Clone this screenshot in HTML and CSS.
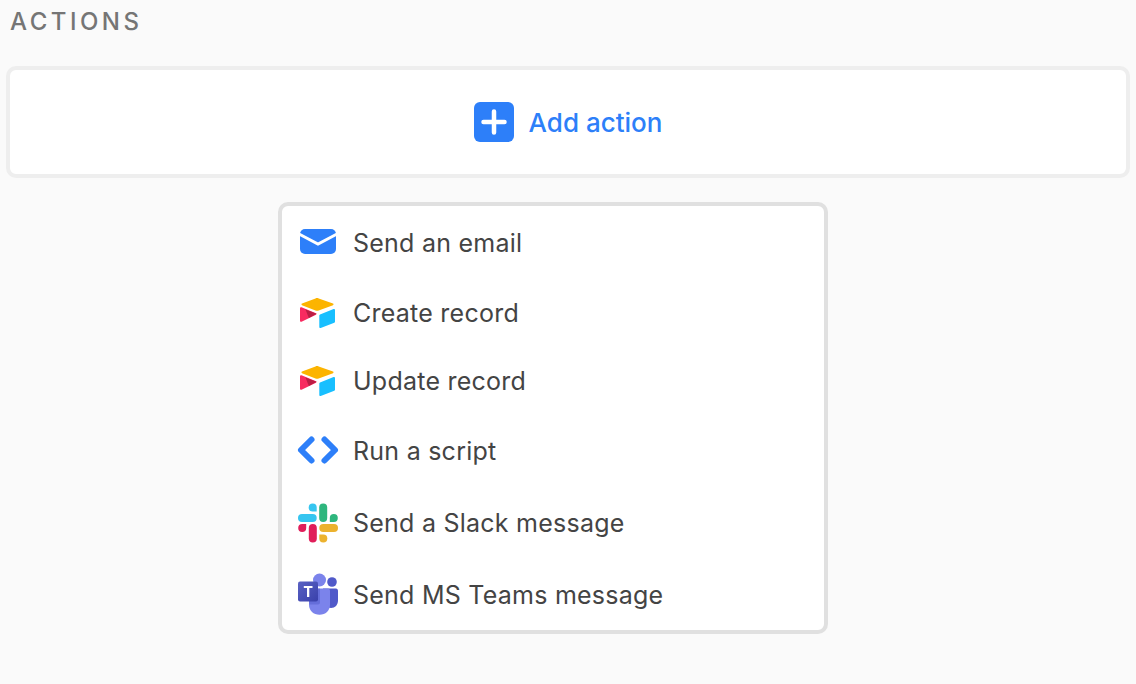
FILE: index.html
```html
<!DOCTYPE html>
<html lang="en">
<head>
<meta charset="utf-8">
<title>Actions</title>
<link rel="stylesheet" href="styles.css">
</head>
<body>
<h2 class="heading">ACTIONS</h2>
<div class="add-card">
  <svg class="add-icon" viewBox="0 0 40 40" width="40" height="40"><rect width="40" height="40" rx="6" fill="#2d7ff9"/><path d="M20 9.500V30.500M9.500 20H30.500" stroke="#fff" stroke-width="4.500" stroke-linecap="round"/></svg>
  <span class="add-label">Add action</span>
</div>
<div class="menu">
  <div class="row row-a">
    <svg class="icon" viewBox="0 0 40 40" width="40" height="40"><rect x="2" y="6" width="36" height="25" rx="5" fill="#2d7ff9"/><path d="M1 11L20 21L39 11" fill="none" stroke="#fff" stroke-width="3"/></svg>
    <span>Send an email</span>
  </div>
  <div class="row row-a">
    <svg class="icon" viewBox="0 0 40 40" width="40" height="40"><path d="M17.500 5.400L4 10.600C3.300 10.900 3.300 11.900 4 12.200L17.500 17.500C18.500 17.900 19.700 17.900 20.700 17.500L35 12.200C35.700 11.900 35.700 10.900 35 10.600L20.700 5.400C19.700 5 18.500 5 17.500 5.400Z" fill="#fcb400"/><path d="M21.300 22.600V34C21.300 34.800 22 35.300 22.700 35L36.300 29.700C36.800 29.500 37 29.100 37 28.700V17C37 16.200 36.300 15.700 35.600 16L22 21.500C21.600 21.700 21.300 22.100 21.300 22.600Z" fill="#18bfff"/><path d="M2 15.300V27.800C2 28.600 2.800 29.100 3.500 28.700L18 21.700C18.600 21.400 18.600 20.600 18 20.300L3.500 14.300C2.800 14 2 14.500 2 15.300Z" fill="#f82b60"/><path d="M7.500 16.500L18.500 20.800L10.800 25Z" fill="#ba1e45"/></svg>
    <span>Create record</span>
  </div>
  <div class="row row-b">
    <svg class="icon" viewBox="0 0 40 40" width="40" height="40"><path d="M17.500 5.400L4 10.600C3.300 10.900 3.300 11.900 4 12.200L17.500 17.500C18.500 17.900 19.700 17.900 20.700 17.500L35 12.200C35.700 11.900 35.700 10.900 35 10.600L20.700 5.400C19.700 5 18.500 5 17.500 5.400Z" fill="#fcb400"/><path d="M21.300 22.600V34C21.300 34.800 22 35.300 22.700 35L36.300 29.700C36.800 29.500 37 29.100 37 28.700V17C37 16.200 36.300 15.700 35.600 16L22 21.500C21.600 21.700 21.300 22.100 21.300 22.600Z" fill="#18bfff"/><path d="M2 15.300V27.800C2 28.600 2.800 29.100 3.500 28.700L18 21.700C18.600 21.400 18.600 20.600 18 20.300L3.500 14.300C2.800 14 2 14.500 2 15.300Z" fill="#f82b60"/><path d="M7.500 16.500L18.500 20.800L10.800 25Z" fill="#ba1e45"/></svg>
    <span>Update record</span>
  </div>
  <div class="row row-c">
    <svg class="icon" viewBox="0 0 40 40" width="40" height="40"><path d="M13.500 8.500L3 19L13.500 29.500M26.500 8.500L37 19L26.500 29.500" fill="none" stroke="#2d7ff9" stroke-width="6" stroke-linecap="round" stroke-linejoin="round"/></svg>
    <span>Run a script</span>
  </div>
  <div class="row row-a">
    <svg class="icon" viewBox="0 0 40 40" width="40" height="40"><g fill="#36c5f0"><path d="M14.700 0.500a4 4 0 0 0 0 8h4v-4a4 4 0 0 0-4-4Z"/><rect x="0" y="11" width="18.700" height="8" rx="4"/></g><g fill="#2eb67d"><path d="M39.800 15a4 4 0 0 0-8 0v4h4a4 4 0 0 0 4-4Z"/><rect x="21.200" y="0.500" width="8" height="18.500" rx="4"/></g><g fill="#ecb22e"><path d="M25.300 39.500a4 4 0 0 0 0-8h-4v4a4 4 0 0 0 4 4Z"/><rect x="21.300" y="21" width="18.700" height="8" rx="4"/></g><g fill="#e01e5a"><path d="M0.200 25a4 4 0 0 0 8 0v-4h-4a4 4 0 0 0-4 4Z"/><rect x="10.800" y="21" width="8" height="18.500" rx="4"/></g></svg>
    <span>Send a Slack message</span>
  </div>
  <div class="row row-c">
    <svg class="icon" viewBox="0 0 40 40" width="40" height="40"><defs><linearGradient id="teams-tile" x1="0" y1="0" x2="1" y2="1"><stop offset="0" stop-color="#5a62c3"/><stop offset="1" stop-color="#3940ab"/></linearGradient></defs><circle cx="34" cy="7" r="4.800" fill="#5059c9"/><path d="M25 13.500H38C39 13.500 40 14.500 40 15.500V25.500C40 30 37 33 33 33C29 33 25 30 25 25.500Z" fill="#5059c9"/><circle cx="21.500" cy="5" r="6.500" fill="#7b83eb"/><path d="M11 13.500H30C31 13.500 32 14.500 32 15.500V30C32 35.500 27.500 39.800 21.500 39.800C15.500 39.800 11 35.500 11 30Z" fill="#7b83eb"/><path d="M11 26H19V13.500H22V27.500C22 28.500 21 29.500 20 29.500H11.500Z" fill="#5059c9" opacity=".5"/><rect x="0" y="6.500" width="20" height="20" rx="2" fill="url(#teams-tile)"/><path d="M5.800 11H14.500V13H11.300V22H9V13H5.800Z" fill="#fff"/></svg>
    <span>Send MS Teams message</span>
  </div>
</div>
</body>
</html>
```
FILE: styles.css
```css
* { box-sizing: border-box; }
html, body { margin: 0; padding: 0; }
body {
  width: 1136px;
  height: 684px;
  overflow: hidden;
  background: #fafafa;
  font-family: Inter, "Liberation Sans", sans-serif;
  color: #444;
}
.heading {
  margin: 0;
  padding: 8px 0 0 10px;
  height: 66px;
  font-size: 24px;
  line-height: 28px;
  font-weight: 500;
  letter-spacing: 3.5px;
  color: #757575;
}
.add-card {
  margin-left: 6px;
  width: 1124px;
  height: 112px;
  border: 4px solid #eee;
  border-radius: 10px;
  background: #fff;
  display: flex;
  align-items: center;
  justify-content: center;
  gap: 15px;
}
.add-label {
  font-size: 26px;
  font-weight: 500;
  color: #2d7ff9;
}
.menu {
  margin: 24px 0 0 278px;
  width: 550px;
  height: 432px;
  border: 4px solid #e0e0e0;
  border-radius: 10px;
  background: #fff;
  padding: 2px 16px 0;
}
.row {
  display: flex;
  align-items: center;
  gap: 15px;
  font-size: 25px;
  letter-spacing: 0.24px;
  color: #444;
}
.row-a { height: 70px; }
.row-b { height: 66px; }
.row-c { height: 74px; }
.icon { flex: none; overflow: visible; }
```
